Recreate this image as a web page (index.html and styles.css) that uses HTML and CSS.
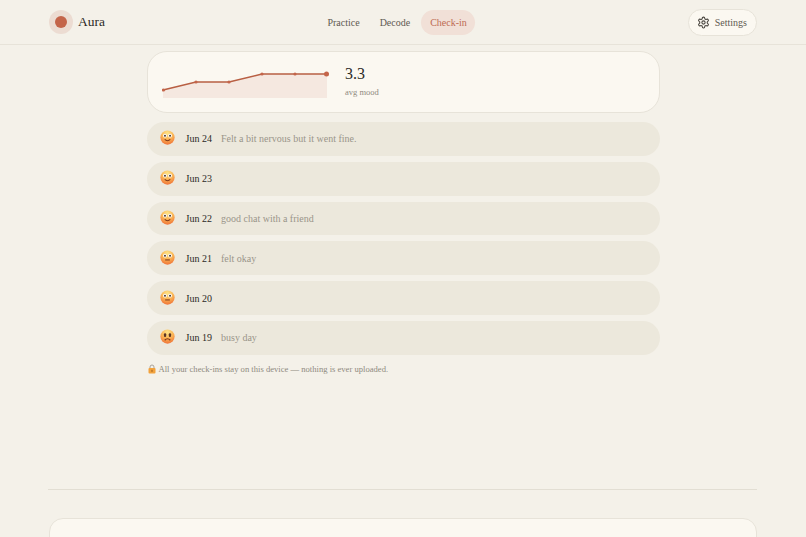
FILE: index.html
```html
<!DOCTYPE html>
<html>
  <head>
    <title>Aura</title>
    <link rel="stylesheet" href="styles.css">
  </head>
  <body>
    <svg class="defs" width="0" height="0">
      <defs>
        <radialGradient id="face" cx="50%" cy="20%" r="85%">
          <stop offset="0%" stop-color="#fde488"/>
          <stop offset="50%" stop-color="#fab354"/>
          <stop offset="100%" stop-color="#ee6c34"/>
        </radialGradient>
      </defs>
    </svg>

    <header class="topbar">
      <div class="brand">
        <span class="brandMark"><span class="brandDot"></span></span>
        <span class="brandName">Aura</span>
      </div>
      <nav class="nav">
        <a class="navLink">Practice</a>
        <a class="navLink">Decode</a>
        <a class="navLink active">Check-in</a>
      </nav>
      <button class="settings">
        <svg width="13" height="13" viewBox="0 0 24 24" fill="none" stroke="#4a4640" stroke-width="2" stroke-linecap="round" stroke-linejoin="round">
          <path d="M12.22 2h-.44a2 2 0 0 0-2 2v.18a2 2 0 0 1-1 1.73l-.43.25a2 2 0 0 1-2 0l-.15-.08a2 2 0 0 0-2.73.73l-.22.38a2 2 0 0 0 .73 2.73l.15.1a2 2 0 0 1 1 1.72v.51a2 2 0 0 1-1 1.74l-.15.09a2 2 0 0 0-.73 2.73l.22.38a2 2 0 0 0 2.73.73l.15-.08a2 2 0 0 1 2 0l.43.25a2 2 0 0 1 1 1.73V20a2 2 0 0 0 2 2h.44a2 2 0 0 0 2-2v-.18a2 2 0 0 1 1-1.73l.43-.25a2 2 0 0 1 2 0l.15.08a2 2 0 0 0 2.73-.73l.22-.39a2 2 0 0 0-.73-2.73l-.15-.08a2 2 0 0 1-1-1.74v-.5a2 2 0 0 1 1-1.74l.15-.09a2 2 0 0 0 .73-2.73l-.22-.38a2 2 0 0 0-2.73-.73l-.15.08a2 2 0 0 1-2 0l-.43-.25a2 2 0 0 1-1-1.73V4a2 2 0 0 0-2-2z"/>
          <circle cx="12" cy="12" r="3"/>
        </svg>
        Settings
      </button>
    </header>

    <main class="content">
      <section class="summary">
        <svg class="chart" width="167" height="36" viewBox="0 0 167 36">
          <path d="M1 27 L34 19 L67 19 L100 11 L133 11 L165 11 L165 35 L1 35 Z" fill="#f5e8e0"/>
          <path d="M1 27 L34 19 L67 19 L100 11 L133 11 L165 11" fill="none" stroke="#b85f43" stroke-width="1.5"/>
          <circle cx="1.5" cy="27" r="1.6" fill="#c4654a"/>
          <circle cx="34" cy="19" r="1.6" fill="#c4654a"/>
          <circle cx="67" cy="19" r="1.6" fill="#c4654a"/>
          <circle cx="100" cy="11" r="1.6" fill="#c4654a"/>
          <circle cx="133" cy="11" r="1.6" fill="#c4654a"/>
          <circle cx="164.5" cy="11" r="2.5" fill="#c4654a"/>
        </svg>
        <div class="avg">
          <div class="avgValue">3.3</div>
          <div class="avgLabel">avg mood</div>
        </div>
      </section>

      <ul class="entries">
        <li class="entry">
          <svg class="face" viewBox="0 0 16 16"><circle cx="8" cy="8" r="7.6" fill="url(#face)"/><circle cx="5.3" cy="6" r="2" fill="#fff"/><circle cx="10.7" cy="6" r="2" fill="#fff"/><circle cx="5.3" cy="6.1" r="1" fill="#3a2a20"/><circle cx="10.7" cy="6.1" r="1" fill="#3a2a20"/><path d="M5 10 Q8 12.8 11 10" fill="none" stroke="#7a3518" stroke-width="1.1"/></svg>
          <span class="date">Jun 24</span><span class="note">Felt a bit nervous but it went fine.</span>
        </li>
        <li class="entry">
          <svg class="face" viewBox="0 0 16 16"><circle cx="8" cy="8" r="7.6" fill="url(#face)"/><circle cx="5.3" cy="6" r="2" fill="#fff"/><circle cx="10.7" cy="6" r="2" fill="#fff"/><circle cx="5.3" cy="6.1" r="1" fill="#3a2a20"/><circle cx="10.7" cy="6.1" r="1" fill="#3a2a20"/><path d="M5 10 Q8 12.8 11 10" fill="none" stroke="#7a3518" stroke-width="1.1"/></svg>
          <span class="date">Jun 23</span>
        </li>
        <li class="entry">
          <svg class="face" viewBox="0 0 16 16"><circle cx="8" cy="8" r="7.6" fill="url(#face)"/><circle cx="5.3" cy="6" r="2" fill="#fff"/><circle cx="10.7" cy="6" r="2" fill="#fff"/><circle cx="5.3" cy="6.1" r="1" fill="#3a2a20"/><circle cx="10.7" cy="6.1" r="1" fill="#3a2a20"/><path d="M5 10 Q8 12.8 11 10" fill="none" stroke="#7a3518" stroke-width="1.1"/></svg>
          <span class="date">Jun 22</span><span class="note">good chat with a friend</span>
        </li>
        <li class="entry">
          <svg class="face" viewBox="0 0 16 16"><circle cx="8" cy="8" r="7.6" fill="url(#face)"/><circle cx="5.3" cy="6" r="2" fill="#fff"/><circle cx="10.7" cy="6" r="2" fill="#fff"/><circle cx="5.3" cy="6.1" r="1" fill="#3a2a20"/><circle cx="10.7" cy="6.1" r="1" fill="#3a2a20"/><path d="M5.5 10.6 H10.5" fill="none" stroke="#7a3518" stroke-width="1.1"/></svg>
          <span class="date">Jun 21</span><span class="note">felt okay</span>
        </li>
        <li class="entry">
          <svg class="face" viewBox="0 0 16 16"><circle cx="8" cy="8" r="7.6" fill="url(#face)"/><circle cx="5.3" cy="6" r="2" fill="#fff"/><circle cx="10.7" cy="6" r="2" fill="#fff"/><circle cx="5.3" cy="6.1" r="1" fill="#3a2a20"/><circle cx="10.7" cy="6.1" r="1" fill="#3a2a20"/><path d="M5.5 10.6 H10.5" fill="none" stroke="#7a3518" stroke-width="1.1"/></svg>
          <span class="date">Jun 20</span>
        </li>
        <li class="entry">
          <svg class="face" viewBox="0 0 16 16"><circle cx="8" cy="8" r="7.6" fill="url(#face)"/><rect x="4.2" y="4.6" width="2.4" height="4" rx="1.1" fill="#5a3526"/><rect x="9.4" y="4.6" width="2.4" height="4" rx="1.1" fill="#5a3526"/><path d="M5 12 Q8 8.8 11 12" fill="none" stroke="#7a3518" stroke-width="1.3"/></svg>
          <span class="date">Jun 19</span><span class="note">busy day</span>
        </li>
      </ul>

      <p class="privacy">
        <svg class="lock" width="8" height="10" viewBox="0 0 8 10"><path d="M2 4.5V3a2 2 0 0 1 4 0v1.5" fill="none" stroke="#a8a29a" stroke-width="1"/><rect x="0.5" y="4" width="7" height="5.5" rx="1" fill="#f2a23c"/><rect x="3.5" y="5.8" width="1" height="2" fill="#9a5a1c"/></svg>
        All your check-ins stay on this device — nothing is ever uploaded.
      </p>
    </main>

    <div class="lower">
      <hr class="divider">
      <div class="panel"></div>
    </div>
  </body>
</html>
```

FILE: styles.css
```css
html, body {
  height: 100%;
}

body {
  margin: 0;
  overflow: hidden;
  background-color: #f4f1e9;
  color: #2c2a26;
  font-family: "Liberation Serif", serif;
  font-size: 10px;
}

.defs {
  display: block;
}

.topbar {
  display: flex;
  justify-content: space-between;
  align-items: center;
  position: relative;
  height: 44px;
  padding: 0 49px;
  border-bottom: 1px solid #e7e3d9;
}

.brand {
  display: flex;
  align-items: center;
  gap: 5px;
}

.brandMark {
  display: flex;
  justify-content: center;
  align-items: center;
  width: 24px;
  height: 24px;
  border-radius: 50%;
  background-color: #ecdcd2;
}

.brandDot {
  width: 12px;
  height: 12px;
  border-radius: 50%;
  background-color: #c4654a;
}

.brandName {
  font-size: 13.5px;
}

.nav {
  display: flex;
  align-items: center;
  gap: 2px;
  margin-left: 1px;
}

.navLink {
  padding: 7px 9px;
  border-radius: 13px;
  color: #5f5a52;
}

.navLink.active {
  padding-right: 8.5px;
  background-color: #f1e0d7;
  color: #bd6a52;
}

.settings {
  display: flex;
  align-items: center;
  gap: 5px;
  height: 27px;
  padding: 0 9px 0 8px;
  border: 1px solid #e7e3d9;
  border-radius: 14px;
  background-color: #fbf8f1;
  color: #5f5a52;
  font-family: inherit;
  font-size: 10px;
}

.content {
  width: 513px;
  margin: 0 auto;
  padding-top: 6px;
}

.summary {
  display: flex;
  align-items: center;
  gap: 16px;
  box-sizing: border-box;
  height: 62px;
  padding: 0 15px 2px 14.5px;
  border: 1px solid #e7e3d9;
  border-radius: 20px;
  background-color: #fbf8f1;
}

.avgValue {
  font-size: 16px;
  line-height: 20px;
}

.avgLabel {
  margin-top: 2px;
  color: #8f8a80;
  font-size: 8.5px;
  line-height: 13px;
}

.entries {
  display: flex;
  flex-direction: column;
  gap: 6px;
  margin: 9px 0 0;
  padding: 0;
  list-style: none;
}

.entry {
  display: flex;
  align-items: center;
  height: 33.8px;
  padding: 0 13px;
  border-radius: 17px;
  background-color: #ece8dc;
}

.face {
  width: 15px;
  height: 15px;
  margin: 0 11px 2px 0;
}

.date {
  width: 35.5px;
}

.note {
  color: #9a958a;
}

.privacy {
  display: flex;
  align-items: center;
  gap: 3px;
  margin: 9px 0 0;
  color: #8f8a80;
  font-size: 8.6px;
}

.lock {
  margin-left: 1px;
}

.lower {
  position: absolute;
  top: 489px;
  left: 48px;
  right: 49px;
}

.divider {
  margin: 0;
  border: 0;
  border-top: 1px solid #e2ded3;
}

.panel {
  box-sizing: border-box;
  height: 60px;
  margin: 28px 0 0 1px;
  border: 1px solid #e7e3d9;
  border-radius: 14px;
  background-color: #fbf8f1;
}
```
